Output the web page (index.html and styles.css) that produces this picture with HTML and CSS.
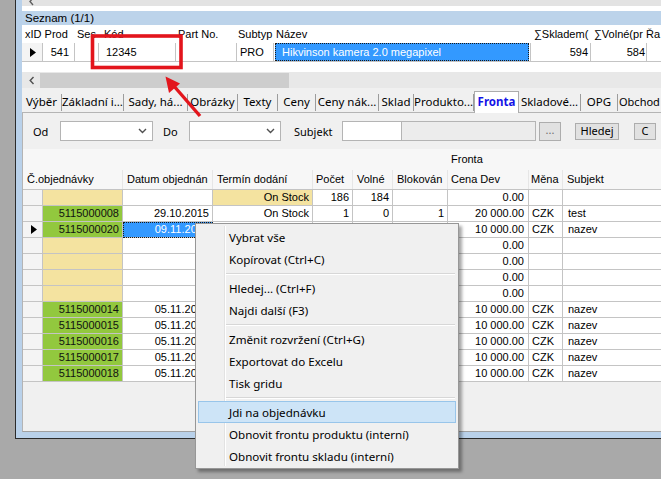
FILE: index.html
```html
<!DOCTYPE html>
<html>
<head>
<meta charset="utf-8">
<title>Fronta</title>
<link rel="stylesheet" href="styles.css">
</head>
<body>
<div class="desk">
  <div class="win">
    <div class="client">
      <div class="topstrip"><svg class="tinyarr" width="6" height="6" viewBox="0 0 6 6"><polyline points="4,-2 1,1.5 4,5" fill="none" stroke="#606060" stroke-width="1.4"/></svg></div>
      <div class="gap5"></div>
      <div class="caption">Seznam (1/1)</div>
      <div class="g1 g1-head">
        <div class="h h-a">xID Prod</div>
        <div class="h h-ses">Ses</div>
        <div class="h h-kod">Kód</div>
        <div class="h h-part">Part No.</div>
        <div class="h h-sub">Subtyp</div>
        <div class="h h-naz">Název</div>
        <div class="h h-skl">∑Skladem(</div>
        <div class="h h-vol">∑Volné(pr</div>
        <div class="h h-ra">Řa</div>
      </div>
      <div class="g1 g1-row">
        <div class="c c-ind"><svg width="6" height="9" viewBox="0 0 6 9"><polygon points="0,0 6,4.5 0,9" fill="#000"/></svg></div>
        <div class="c c-xid r">541</div>
        <div class="c c-ses"></div>
        <div class="c c-kod">12345</div>
        <div class="c c-part"></div>
        <div class="c c-sub">PRO</div>
        <div class="c c-naz"><span class="selcell">Hikvinson kamera 2.0 megapixel</span></div>
        <div class="c c-skl r">594</div>
        <div class="c c-vol r">584</div>
        <div class="c c-ra"></div>
      </div>
      <div class="gap10"></div>
      <div class="hscroll">
        <svg class="sarr" width="6" height="9" viewBox="0 0 6 9"><polyline points="4.5,1 1.2,4.5 4.5,8" fill="none" stroke="#505050" stroke-width="1.4"/></svg>
        <div class="thumb"></div>
      </div>
      <div class="tabs">
        <div class="tab t1">Výběr</div>
        <div class="tab t2">Základní i...</div>
        <div class="tab t3">Sady, há...</div>
        <div class="tab t4">Obrázky</div>
        <div class="tab t5">Texty</div>
        <div class="tab t6">Ceny</div>
        <div class="tab t7">Ceny nák...</div>
        <div class="tab t8">Sklad</div>
        <div class="tab t9">Produkto...</div>
        <div class="tab active">Fronta</div>
        <div class="tab t11">Skladové...</div>
        <div class="tab t12">OPG</div>
        <div class="tab t13">Obchod</div>
      </div>
      <div class="panel">
        <div class="filters">
          <span class="lbl l-od">Od</span>
          <div class="combo cb1"><svg class="chev" width="9" height="6" viewBox="0 0 9 6"><polyline points="1,1 4.5,4.5 8,1" fill="none" stroke="#505050" stroke-width="1.4"/></svg></div>
          <span class="lbl l-do">Do</span>
          <div class="combo cb2"><svg class="chev" width="9" height="6" viewBox="0 0 9 6"><polyline points="1,1 4.5,4.5 8,1" fill="none" stroke="#505050" stroke-width="1.4"/></svg></div>
          <span class="lbl l-sub">Subjekt</span>
          <div class="inp inp-w"></div>
          <div class="inp inp-g"></div>
          <div class="btn b-dots">...</div>
          <div class="btn b-hl">Hledej</div>
          <div class="btn b-c">C</div>
        </div>
        <div class="grid2">
          <div class="band"><span>Fronta</span></div>
          <div class="g2head">
            <div class="gh w-h1">Č.objednávky</div>
            <div class="gh w-dat">Datum objednán</div>
            <div class="gh w-ter">Termín dodání</div>
            <div class="gh w-poc">Počet</div>
            <div class="gh w-vol">Volné</div>
            <div class="gh w-blk">Blokován</div>
            <div class="gh w-cen">Cena Dev</div>
            <div class="gh w-men">Měna</div>
            <div class="gh w-sbj">Subjekt</div>
          </div>

          <div class="row">
            <div class="d w-ind"></div><div class="d w-obj yel r"></div><div class="d w-dat r"></div><div class="d w-ter yel r">On Stock</div><div class="d w-poc r">186</div><div class="d w-vol r">184</div><div class="d w-blk r"></div><div class="d w-cen r">0.00</div><div class="d w-men"></div><div class="d w-sbj"></div>
          </div>
          <div class="row">
            <div class="d w-ind"></div><div class="d w-obj grn r">5115000008</div><div class="d w-dat r">29.10.2015</div><div class="d w-ter r">On Stock</div><div class="d w-poc r">1</div><div class="d w-vol r">0</div><div class="d w-blk r">1</div><div class="d w-cen r">20 000.00</div><div class="d w-men">CZK</div><div class="d w-sbj">test</div>
          </div>
          <div class="row">
            <div class="d w-ind"><svg width="6" height="9" viewBox="0 0 6 9"><polygon points="0,0 6,4.5 0,9" fill="#000"/></svg></div><div class="d w-obj grn r">5115000020</div><div class="d w-dat r sel">09.11.2015</div><div class="d w-ter r"></div><div class="d w-poc r"></div><div class="d w-vol r"></div><div class="d w-blk r"></div><div class="d w-cen r">10 000.00</div><div class="d w-men">CZK</div><div class="d w-sbj">nazev</div>
          </div>
          <div class="row">
            <div class="d w-ind"></div><div class="d w-obj yel r"></div><div class="d w-dat r"></div><div class="d w-ter r"></div><div class="d w-poc r"></div><div class="d w-vol r"></div><div class="d w-blk r"></div><div class="d w-cen r">0.00</div><div class="d w-men"></div><div class="d w-sbj"></div>
          </div>
          <div class="row">
            <div class="d w-ind"></div><div class="d w-obj yel r"></div><div class="d w-dat r"></div><div class="d w-ter r"></div><div class="d w-poc r"></div><div class="d w-vol r"></div><div class="d w-blk r"></div><div class="d w-cen r">0.00</div><div class="d w-men"></div><div class="d w-sbj"></div>
          </div>
          <div class="row">
            <div class="d w-ind"></div><div class="d w-obj yel r"></div><div class="d w-dat r"></div><div class="d w-ter r"></div><div class="d w-poc r"></div><div class="d w-vol r"></div><div class="d w-blk r"></div><div class="d w-cen r">0.00</div><div class="d w-men"></div><div class="d w-sbj"></div>
          </div>
          <div class="row">
            <div class="d w-ind"></div><div class="d w-obj yel r"></div><div class="d w-dat r"></div><div class="d w-ter r"></div><div class="d w-poc r"></div><div class="d w-vol r"></div><div class="d w-blk r"></div><div class="d w-cen r">0.00</div><div class="d w-men"></div><div class="d w-sbj"></div>
          </div>
          <div class="row">
            <div class="d w-ind"></div><div class="d w-obj grn r">5115000014</div><div class="d w-dat r">05.11.2015</div><div class="d w-ter r"></div><div class="d w-poc r"></div><div class="d w-vol r"></div><div class="d w-blk r"></div><div class="d w-cen r">10 000.00</div><div class="d w-men">CZK</div><div class="d w-sbj">nazev</div>
          </div>
          <div class="row">
            <div class="d w-ind"></div><div class="d w-obj grn r">5115000015</div><div class="d w-dat r">05.11.2015</div><div class="d w-ter r"></div><div class="d w-poc r"></div><div class="d w-vol r"></div><div class="d w-blk r"></div><div class="d w-cen r">10 000.00</div><div class="d w-men">CZK</div><div class="d w-sbj">nazev</div>
          </div>
          <div class="row">
            <div class="d w-ind"></div><div class="d w-obj grn r">5115000016</div><div class="d w-dat r">05.11.2015</div><div class="d w-ter r"></div><div class="d w-poc r"></div><div class="d w-vol r"></div><div class="d w-blk r"></div><div class="d w-cen r">10 000.00</div><div class="d w-men">CZK</div><div class="d w-sbj">nazev</div>
          </div>
          <div class="row">
            <div class="d w-ind"></div><div class="d w-obj grn r">5115000017</div><div class="d w-dat r">05.11.2015</div><div class="d w-ter r"></div><div class="d w-poc r"></div><div class="d w-vol r"></div><div class="d w-blk r"></div><div class="d w-cen r">10 000.00</div><div class="d w-men">CZK</div><div class="d w-sbj">nazev</div>
          </div>
          <div class="row">
            <div class="d w-ind"></div><div class="d w-obj grn r">5115000018</div><div class="d w-dat r">05.11.2015</div><div class="d w-ter r"></div><div class="d w-poc r"></div><div class="d w-vol r"></div><div class="d w-blk r"></div><div class="d w-cen r">10 000.00</div><div class="d w-men">CZK</div><div class="d w-sbj">nazev</div>
          </div>
        </div>
      </div>
    </div>
  </div>

  <div class="menu">
    <div class="mi">Vybrat vše</div>
    <div class="mi">Kopírovat (Ctrl+C)</div>
    <div class="msep"></div>
    <div class="mi">Hledej... (Ctrl+F)</div>
    <div class="mi">Najdi další (F3)</div>
    <div class="msep"></div>
    <div class="mi">Změnit rozvržení (Ctrl+G)</div>
    <div class="mi">Exportovat do Excelu</div>
    <div class="mi">Tisk gridu</div>
    <div class="msep"></div>
    <div class="mi hot">Jdi na objednávku</div>
    <div class="mi">Obnovit frontu produktu (interní)</div>
    <div class="mi">Obnovit frontu skladu (interní)</div>
  </div>

  <svg class="annot" width="661" height="479" viewBox="0 0 661 479">
    <rect x="92.5" y="36" width="88.5" height="31.5" fill="none" stroke="#e3151c" stroke-width="3.6"/>
    <line x1="200" y1="116" x2="173" y2="85" stroke="#e3151c" stroke-width="3.4"/>
    <polygon points="165.5,76.5 180,83.5 169,93" fill="#e3151c"/>
  </svg>
</div>
</body>
</html>
```

FILE: styles.css
```css
* { box-sizing: border-box; }
html, body { margin: 0; padding: 0; }
body { background: #a9a9a9; }

.desk {
  position: relative;
  width: 661px;
  height: 479px;
  overflow: hidden;
  background: #a9a9a9;
  font-family: "Liberation Sans", Arial, sans-serif;
  font-size: 11px;
  color: #000;
}

.win {
  margin-left: 15px;
  width: 720px;
  height: 439px;
  background: #b9d1ea;
  border-left: 1px solid #2b2b2b;
  border-bottom: 1px solid #2b2b2b;
  padding: 0 0 6px 6px;
}

.client {
  height: 432px;
  display: flex;
  flex-direction: column;
  background: #f0f0f0;
}

.topstrip {
  height: 6px;
  background: #e3e3e3;
  padding-left: 7px;
  flex: none;
}
.tinyarr { display: block; }
.gap5 { height: 5px; background: #fff; flex: none; }
.caption {
  height: 14px;
  line-height: 14px;
  background: #bcd3ea;
  padding-left: 3px;
  flex: none;
  font-size: 11.5px;
}

/* top grid */
.g1 { display: flex; flex: none; background: #fff; white-space: nowrap; }
.g1-head { height: 18px; line-height: 18px; }
.g1 .h { overflow: hidden; flex: none; }
.h-a { width: 52px; padding-left: 3px; }
.h-ses { width: 24px; padding-left: 3px; }
.h-kod { width: 77px; padding-left: 6px; }
.h-part { width: 61px; padding-left: 3px; }
.h-sub { width: 37px; padding-left: 2px; }
.h-naz { width: 257px; padding-left: 3px; }
.h-skl { width: 60px; padding-left: 4px; }
.h-vol { width: 56px; padding-left: 4px; }
.h-ra { width: 40px; padding-left: 0; }

.g1-row { height: 19px; line-height: 18px; border-bottom: 1px solid #c4c4c4; }
.g1-row .c { flex: none; height: 18px; border-right: 1px solid #c4c4c4; overflow: hidden; }
.c-ind { width: 21px; background: #f4f4f4; display: flex; align-items: center; padding-left: 8px; }
.c-ind svg { display: block; }
.c-xid { width: 32px; padding-right: 5px; }
.c-ses { width: 24px; }
.c-kod { width: 77px; padding-left: 7px; }
.c-part { width: 61px; }
.c-sub { width: 37px; padding-left: 3px; }
.c-naz { width: 257px; padding: 0 1px 0 1px; }
.c-skl { width: 60px; padding-right: 2px; }
.c-vol { width: 56px; padding-right: 1px; }
.c-ra { width: 40px; border-right: none !important; }
.r { text-align: right; }
.selcell {
  display: block;
  height: 18px;
  background: #3399ff;
  color: #fff;
  padding-left: 7px;
  outline: 1px dotted #1a1a1a;
  outline-offset: -1px;
}

.gap10 { height: 10px; background: #fff; flex: none; }

.hscroll {
  height: 16px;
  background: #e8e8e8;
  display: flex;
  align-items: center;
  flex: none;
  padding-left: 7px;
}
.sarr { display: block; flex: none; }
.thumb { width: 249px; height: 15px; margin-left: 5px; background: #cdcdcd; }

/* tabs */
.tabs {
  height: 24px;
  display: flex;
  align-items: flex-end;
  flex: none;
  font-family: "Noto Sans", "Open Sans", sans-serif;
  font-size: 11.5px;
  white-space: nowrap;
  position: relative;
  z-index: 2;
}
.tab {
  height: 17px;
  line-height: 16px;
  margin-bottom: 1px;
  border-right: 1px solid #9c9c9c;
  text-align: center;
  flex: none;
  overflow: hidden;
}
.t1 { width: 40px; }
.t2 { width: 62px; }
.t3 { width: 64px; }
.t4 { width: 50px; }
.t5 { width: 40px; }
.t6 { width: 38px; }
.t7 { width: 63px; }
.t8 { width: 35px; }
.t9 { width: 60px; }
.tab.active {
  width: 45px;
  height: 22px;
  line-height: 20px;
  margin-bottom: -1px;
  background: #fff;
  border: 1px solid #acacac;
  border-bottom: none;
  color: #1414e6;
  font-weight: 700;
}
.t11 { width: 62px; }
.t12 { width: 37px; }
.t13 { width: 44px; border-right: none; text-align: left; padding-left: 1px; font-size: 11px; overflow: visible; }

/* panel */
.panel {
  flex: 1;
  border-top: 1px solid #b4b4b4;
  border-left: 1px solid #b4b4b4;
  border-bottom: 1px solid #a0a0a0;
  background: #f0f0f0;
  display: flex;
  flex-direction: column;
}

.filters {
  margin-top: 8px;
  height: 20px;
  display: flex;
  align-items: center;
  font-family: "Noto Sans", "Open Sans", sans-serif;
  font-size: 11px;
  flex: none;
  white-space: nowrap;
}
.lbl { flex: none; }
.l-od { margin-left: 10px; width: 27px; }
.l-do { margin-left: 10px; width: 26px; }
.l-sub { margin-left: 13px; width: 48px; }
.combo {
  height: 20px;
  background: #fff;
  border: 1px solid #b4b4b4;
  display: flex;
  align-items: center;
  justify-content: flex-end;
  padding-right: 5px;
  flex: none;
}
.cb1 { width: 93px; }
.cb2 { width: 92px; }
.chev { display: block; }
.inp { height: 20px; border: 1px solid #b4b4b4; flex: none; }
.inp-w { width: 60px; background: #fff; }
.inp-g { width: 135px; background: #ececec; margin-left: -1px; }
.btn {
  height: 17px;
  line-height: 14px;
  background: #e1e1e1;
  border: 1px solid #adadad;
  text-align: center;
  flex: none;
}
.b-dots { margin-left: 3px; width: 22px; color: #707070; height: 19px; line-height: 14px; }
.b-hl { margin-left: 14px; width: 44px; }
.b-c { margin-left: 15px; width: 22px; }

/* lower grid */
.grid2 { margin-top: 8px; flex: none; white-space: nowrap; }
.band {
  height: 21px;
  line-height: 20px;
  padding-left: 428px;
  background: #f7f7f7;
}
.g2head {
  display: flex;
  height: 20px;
  line-height: 19px;
  background: #f7f7f7;
  border-bottom: 1px solid #c4c4c4;
}
.gh { flex: none; padding-left: 4px; overflow: hidden; border-right: 1px solid #e6e6e6; }
.w-h1 { width: 100px; }
.w-ind { width: 20px; }
.w-obj { width: 80px; }
.w-dat { width: 90px; }
.w-ter { width: 100px; }
.w-poc { width: 40px; }
.w-vol { width: 40px; }
.w-blk { width: 55px; }
.w-cen { width: 81px; }
.w-men { width: 34px; }
.w-sbj { width: 130px; }
.g2head .w-poc { padding-left: 3px; }
.g2head .w-cen { padding-left: 3px; }
.g2head .w-men { padding-left: 2px; }

.row { display: flex; height: 16px; }
.d {
  flex: none;
  height: 16px;
  line-height: 15px;
  border-right: 1px solid #c4c4c4;
  border-bottom: 1px solid #c4c4c4;
  background: #fff;
  overflow: hidden;
}
.d.r { padding-right: 3px; }
.d.w-cen { padding-right: 4px; }
.d.w-men { padding-left: 3px; }
.d.w-sbj { padding-left: 5px; }
.d.w-ind { background: #f4f4f4; display: flex; align-items: center; padding-left: 8px; }
.d.w-ind svg { display: block; }
.yel { background: #f4e3a0; }
.grn { background: #92c83e; color: #111; }
.sel { background: #3399ff; color: #fff; outline: 1px dotted #1a1a1a; outline-offset: -1px; }

/* context menu */
.menu {
  position: absolute;
  left: 195px;
  top: 223px;
  width: 264px;
  height: 246px;
  background: #f0f0f0;
  border: 1px solid #979797;
  box-shadow: 3px 3px 3px rgba(0, 0, 0, 0.35);
  padding: 2px 0 2px 0;
  font-family: "Noto Sans", "Open Sans", sans-serif;
  font-size: 11.6px;
  z-index: 5;
}
.menu::before {
  content: "";
  position: absolute;
  left: 28px;
  top: 2px;
  bottom: 2px;
  width: 1px;
  background: #e2e2e2;
  box-shadow: 1px 0 0 #ffffff;
}
.mi {
  height: 22px;
  line-height: 21px;
  padding-left: 30px;
  margin: 0 2px;
  border: 1px solid transparent;
  position: relative;
  white-space: nowrap;
}
.mi.hot { background: #cde4f7; border-color: #98c5ea; }
.msep {
  height: 7px;
  margin-left: 30px;
  margin-right: 3px;
  position: relative;
}
.msep::after {
  content: "";
  position: absolute;
  left: 0;
  right: 0;
  top: 3px;
  height: 1px;
  background: #d7d7d7;
  box-shadow: 0 1px 0 #ffffff;
}

.annot {
  position: absolute;
  left: 0;
  top: 0;
  z-index: 10;
  pointer-events: none;
}
```
